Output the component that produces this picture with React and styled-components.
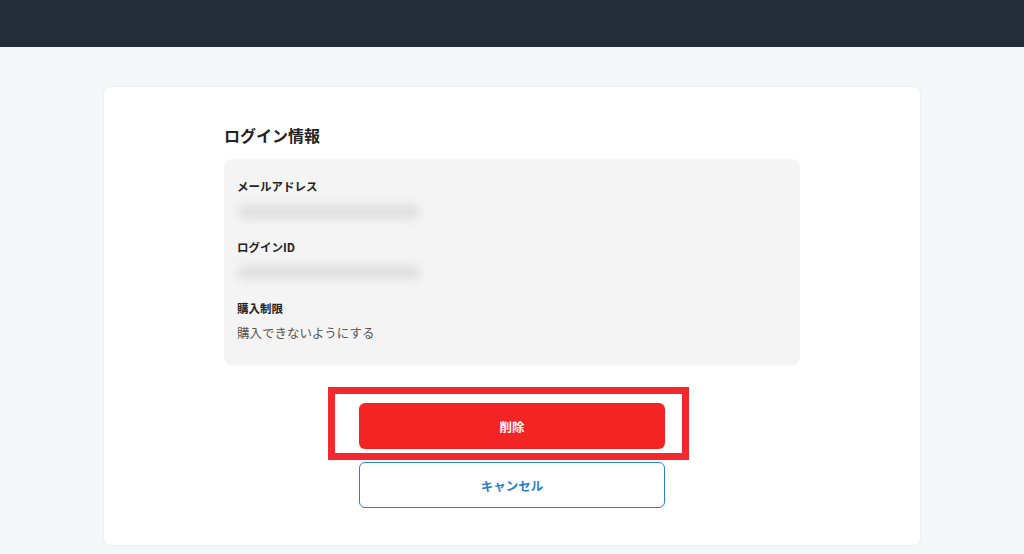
import React from "react";
import styled, { createGlobalStyle } from "styled-components";

const GlobalStyle = createGlobalStyle`
  body {
    margin: 0;
    background: #f5f7f9;
    font-family: "Noto Sans CJK JP", "Noto Sans", sans-serif;
    color: #222;
  }
`;

const fields = [
  { label: "メールアドレス", blurred: true },
  { label: "ログインID", blurred: true },
  { label: "購入制限", value: "購入できないようにする" },
];

const App = () => {
  return (
    <>
      <GlobalStyle />
      <Header />
      <Main>
        <Card>
          <Content>
            <Title>ログイン情報</Title>
            <InfoBox>
              {fields.map((f) => (
                <Field key={f.label}>
                  <Label>{f.label}</Label>
                  {f.blurred ? <Blurred /> : <Value>{f.value}</Value>}
                </Field>
              ))}
            </InfoBox>
          </Content>
          <Actions>
            <Highlighted>
              <DangerButton>削除</DangerButton>
              <HighlightFrame />
            </Highlighted>
            <OutlineButton>キャンセル</OutlineButton>
          </Actions>
        </Card>
      </Main>
    </>
  );
};

const Header = styled.header`
  height: 47px;
  background: #232d3a;
`;

const Main = styled.main`
  padding: 39px 0 8px;
`;

const Card = styled.section`
  width: 818px;
  box-sizing: border-box;
  margin: 0 auto;
  background: #fff;
  border: 1px solid #edf0f3;
  border-radius: 8px;
  padding: 36px 0 37px;
`;

const Content = styled.div`
  width: 576px;
  margin: 0 auto;
`;

const Title = styled.h2`
  margin: 0 0 12px;
  font-size: 16px;
  line-height: 24px;
  font-weight: 700;
  color: #222;
`;

const InfoBox = styled.div`
  background: #f4f4f4;
  border-radius: 8px;
  padding: 18px 13px 23px;
  display: flex;
  flex-direction: column;
  gap: 18px;
`;

const Field = styled.div`
  display: flex;
  flex-direction: column;
  gap: 7px;
`;

const Label = styled.div`
  font-size: 11.5px;
  line-height: 18px;
  font-weight: 700;
  color: #222;
`;

const Value = styled.div`
  font-size: 12.5px;
  line-height: 18px;
  color: #555;
`;

const Blurred = styled.div`
  width: 182px;
  height: 15px;
  margin: 2px 0 1px 1px;
  background: #e0e0e0;
  border-radius: 7px;
  filter: blur(4px);
`;

const Actions = styled.div`
  margin-top: 38px;
  display: flex;
  flex-direction: column;
  align-items: center;
  gap: 13px;
`;

const Highlighted = styled.div`
  position: relative;
`;

const HighlightFrame = styled.div`
  position: absolute;
  left: -31px;
  right: -24px;
  top: -16px;
  bottom: -11px;
  border: 7px solid #f2282c;
  pointer-events: none;
`;

const BaseButton = styled.button`
  display: block;
  width: 306px;
  height: 46px;
  box-sizing: border-box;
  border-radius: 6px;
  font-family: inherit;
  font-size: 12.5px;
  font-weight: 700;
  cursor: pointer;
`;

const DangerButton = styled(BaseButton)`
  background: #f22424;
  border: none;
  color: #fff;
`;

const OutlineButton = styled(BaseButton)`
  background: #fff;
  border: 1.5px solid #2b80c5;
  color: #2b80c5;
`;

export default App;
